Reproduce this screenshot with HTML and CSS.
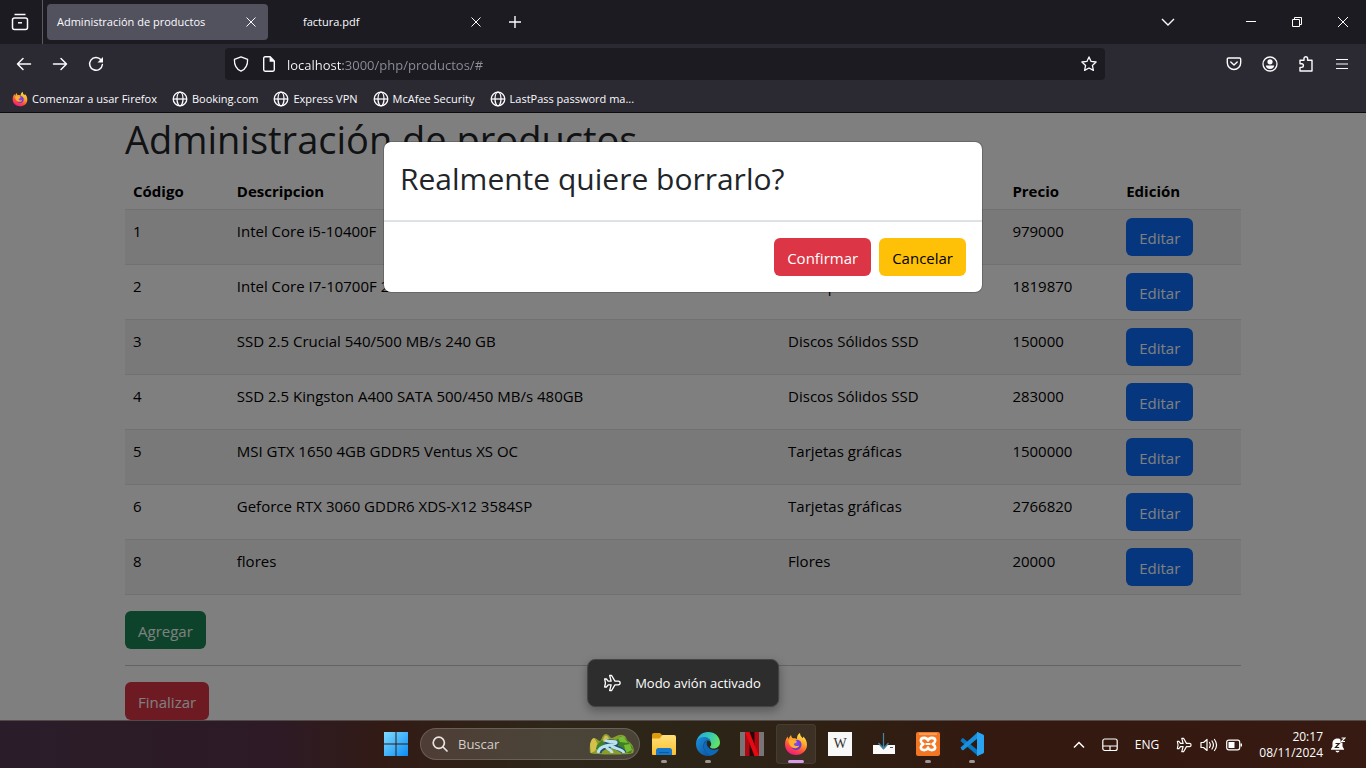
FILE: index.html
```html
<!DOCTYPE html>
<html lang="es">
<head>
<meta charset="utf-8">
<title>Administración de productos</title>
<link rel="stylesheet" href="styles.css">
</head>
<body>
<svg class="defs" aria-hidden="true">
  <defs>
    <linearGradient id="ff-body" x1="0.8" y1="0" x2="0.3" y2="1"><stop offset="0" stop-color="#fff04a"/><stop offset=".4" stop-color="#ffa22c"/><stop offset=".7" stop-color="#ff4b3e"/><stop offset="1" stop-color="#f0148a"/></linearGradient>
    <radialGradient id="ff-core" cx=".5" cy=".4" r=".6"><stop offset="0" stop-color="#8a4cf4"/><stop offset="1" stop-color="#5a37c8"/></radialGradient>
    <linearGradient id="win" x1="0" y1="0" x2="1" y2="1"><stop offset="0" stop-color="#7fdcff"/><stop offset="1" stop-color="#0a8cf5"/></linearGradient>
    <linearGradient id="folder" x1="0" y1="0" x2="0" y2="1"><stop offset="0" stop-color="#ffdf7a"/><stop offset="1" stop-color="#fcbf2d"/></linearGradient>
    <linearGradient id="edge-a" x1="0" y1="0" x2="1" y2=".3"><stop offset="0" stop-color="#22a5e0"/><stop offset=".6" stop-color="#35c9b4"/><stop offset="1" stop-color="#5fe06a"/></linearGradient>
    <linearGradient id="edge-b" x1="0" y1="0" x2="1" y2="1"><stop offset="0" stop-color="#1b8fdc"/><stop offset="1" stop-color="#0c4f9e"/></linearGradient>
    <symbol id="firefox" viewBox="0 0 24 24">
      <path fill="url(#ff-body)" d="M12 23C5.500 23 1 18.300 1 12.500c0-3 1-5.800 2.600-7.900.2 1.200.6 1.900 1.200 2.500.3-1.700 1-3 2.300-4.200.1 1.500.7 2.600 1.700 3.400 1.800-.4 3.200 0 4.200.9C12.700 4.300 13.900 2.200 16 1c.1 2.500 1.200 3.700 2.700 5.200.4-.5.6-1 .6-1.700 2.400 2.200 3.700 5 3.700 8.200C23 18.600 18.300 23 12 23z"/>
      <path fill="url(#ff-core)" d="M7.500 9.500c1.300-.5 2.500-.3 3.400.4.700-1.500 2-2.200 3.500-2 2 .8 3.100 2.500 3.100 4.700 0 3-2.400 5.300-5.400 5.300-2.900 0-5.300-2.200-5.300-5.100 0-1.200.2-2.300.7-3.300z"/>
      <path fill="#ffb02e" d="M4.500 8.500c1.700-1.300 4.300-1.200 5.700.2 1.100.1 2.200.2 2.800.8-.4 1.300-1.900 1.700-3 2.300-.4 1.200.6 2.300 2.300 2.300 1.200 0 1.900-.6 3-.3-.9 1.900-3.200 3-5.500 2.300-2.800-.8-5.300-3.600-5.300-7.600z"/>
    </symbol>
    <symbol id="globe" viewBox="0 0 16 16">
      <g fill="none" stroke="#fbfbfe" stroke-width="1.300"><circle cx="8" cy="8" r="6.800"/><ellipse cx="8" cy="8" rx="3" ry="6.800"/><path d="M1.200 8h13.600"/></g>
    </symbol>
    <symbol id="plane" viewBox="0 0 18 18">
      <path fill="none" stroke="#fff" stroke-width="1.300" stroke-linejoin="round" d="M1.500 5h1.800L5 7.200h3L6.500 1.500h2L11.800 7.200H15c1.300 0 2 .8 2 1.800s-.7 1.800-2 1.800h-3.200l-3.300 5.700h-2L8 10.800H5L3.300 13H1.500l.8-4z"/>
    </symbol>
    <symbol id="cross" viewBox="0 0 12 12"><path d="M1.500 1.500l9 9M10.500 1.500l-9 9" fill="none" stroke="#fbfbfe"/></symbol>
  </defs>
</svg>

<header class="browser">
  <div class="tabstrip">
    <button class="view" aria-label="Ver pestañas"><svg width="18" height="18" viewBox="0 0 18 18" fill="none" stroke="#fbfbfe" stroke-width="1.500"><path d="M3.500 1.500h11"/><rect x="1.500" y="5" width="15" height="11.500" rx="2"/><path d="M7 9.800h4"/></svg></button>
    <div class="tab active"><span>Administración de productos</span><button aria-label="Cerrar pestaña"><svg width="12" height="12"><use href="#cross"/></svg></button></div>
    <div class="tab"><span>factura.pdf</span><button aria-label="Cerrar pestaña"><svg width="12" height="12"><use href="#cross"/></svg></button></div>
    <button class="new-tab" aria-label="Nueva pestaña"><svg width="12" height="12" viewBox="0 0 12 12" stroke="#fbfbfe" stroke-width="1.400"><path d="M6 0v12M0 6h12"/></svg></button>
    <button class="list-tabs" aria-label="Lista de pestañas"><svg width="14" height="8" viewBox="0 0 14 8" fill="none" stroke="#fbfbfe" stroke-width="1.400"><path d="M1 1l6 6 6-6"/></svg></button>
    <div class="window-buttons">
      <button aria-label="Minimizar"><svg width="10" height="10" viewBox="0 0 10 10"><path d="M0 4.500h10" stroke="#fff"/></svg></button>
      <button aria-label="Restaurar"><svg width="10" height="10" viewBox="0 0 10 10" fill="none" stroke="#fff"><path d="M.5 2.500h7v7h-7zM2.500 2.500v-2h7v7h-2"/></svg></button>
      <button aria-label="Cerrar"><svg width="10" height="10" viewBox="0 0 10 10"><path d="M0 0l10 10M10 0L0 10" stroke="#fff"/></svg></button>
    </div>
  </div>

  <div class="toolbar">
    <div class="tools">
      <button aria-label="Atrás"><svg width="16" height="16" viewBox="0 0 16 16" fill="none" stroke="#fbfbfe" stroke-width="1.500" stroke-linecap="round" stroke-linejoin="round"><path d="M14.500 8H1.500M7 2.500L1.500 8 7 13.500"/></svg></button>
      <button aria-label="Adelante"><svg width="16" height="16" viewBox="0 0 16 16" fill="none" stroke="#fbfbfe" stroke-width="1.500" stroke-linecap="round" stroke-linejoin="round"><path d="M1.500 8h13M9 2.500L14.500 8 9 13.500"/></svg></button>
      <button aria-label="Recargar"><svg width="16" height="16" viewBox="0 0 16 16"><path d="M13 3.800A6.400 6.400 0 1 0 14.400 8.500" fill="none" stroke="#fbfbfe" stroke-width="1.500" stroke-linecap="round"/><path d="M15 1v5.500H9.500z" fill="#fbfbfe"/></svg></button>
    </div>
    <div class="urlbar">
      <svg width="16" height="16" viewBox="0 0 16 16" fill="none" stroke="#fbfbfe" stroke-width="1.300" stroke-linejoin="round"><path d="M8 .8l6.600 2.600c.2 5.500-2 9.600-6.600 11.800C3.400 13 1.200 8.900 1.400 3.400z"/></svg>
      <svg width="16" height="16" viewBox="0 0 16 16"><path d="M2.700 2.200c0-.8.500-1.400 1.400-1.400h5l4.200 4.300v8.700c0 .8-.5 1.400-1.400 1.400H4.100c-.9 0-1.400-.6-1.400-1.400z" fill="none" stroke="#fbfbfe" stroke-width="1.400"/><path d="M8.600.8v5h5z" fill="#fbfbfe"/></svg>
      <input type="text" aria-label="Dirección" value="localhost:3000/php/productos/#">
      <button aria-label="Añadir a marcadores"><svg width="16" height="16" viewBox="0 0 16 16" fill="none" stroke="#fbfbfe" stroke-width="1.300" stroke-linejoin="round"><path d="M8 .9l2.100 4.500 5 .6-3.700 3.400 1 5L8 12l-4.400 2.400 1-5L.9 6l5-.6z"/></svg></button>
    </div>
    <div class="tools">
      <button aria-label="Pocket"><svg width="16" height="16" viewBox="0 0 16 16" fill="none" stroke="#fbfbfe" stroke-width="1.400" stroke-linecap="round" stroke-linejoin="round"><path d="M2.500 2h11c.7 0 1.200.5 1.200 1.200v3.600a6.700 6.700 0 0 1-13.400 0V3.200C1.300 2.500 1.800 2 2.500 2z"/><path d="M4.800 6L8 9l3.200-3"/></svg></button>
      <button aria-label="Cuenta"><svg width="16" height="16" viewBox="0 0 16 16"><circle cx="8" cy="8" r="7" fill="none" stroke="#fbfbfe" stroke-width="1.300"/><circle cx="8" cy="5.800" r="2.600" fill="#fbfbfe"/><path d="M3.800 9.500h8.400c0 2-1.800 3.400-4.200 3.400s-4.200-1.400-4.200-3.400z" fill="#fbfbfe"/></svg></button>
      <button aria-label="Extensiones"><svg width="16" height="16" viewBox="0 0 16 16" fill="none" stroke="#fbfbfe" stroke-width="1.400" stroke-linejoin="round"><path d="M2 4.300h4V2.500a1.800 1.800 0 0 1 3.600 0v1.800H14V15H2v-3.600h1.600a1.800 1.800 0 0 0 0-3.600H2z"/></svg></button>
      <button aria-label="Menú"><svg width="16" height="16" viewBox="0 0 16 16" stroke="#fbfbfe" stroke-width="1.200"><path d="M2 3.500h12M2 8h12M2 12.500h12"/></svg></button>
    </div>
  </div>

  <nav class="bookmarks">
    <a href="#"><svg width="16" height="16"><use href="#firefox"/></svg>Comenzar a usar Firefox</a>
    <a href="#"><svg width="16" height="16"><use href="#globe"/></svg>Booking.com</a>
    <a href="#"><svg width="16" height="16"><use href="#globe"/></svg>Express VPN</a>
    <a href="#"><svg width="16" height="16"><use href="#globe"/></svg>McAfee Security</a>
    <a href="#"><svg width="16" height="16"><use href="#globe"/></svg>LastPass password ma...</a>
  </nav>
</header>

<main class="page">
  <div class="container">
    <h1>Administración de productos</h1>
    <table class="products">
      <colgroup><col class="c-code"><col class="c-desc"><col class="c-cat"><col class="c-price"><col class="c-edit"></colgroup>
      <thead><tr><th scope="col">Código</th><th scope="col">Descripcion</th><th scope="col">Categoría</th><th scope="col">Precio</th><th scope="col">Edición</th></tr></thead>
      <tbody>
        <tr><td>1</td><td>Intel Core i5-10400F</td><td>Microprocesadores</td><td>979000</td><td><a class="btn primary" href="#">Editar</a></td></tr>
        <tr><td>2</td><td>Intel Core I7-10700F 2.9GHz</td><td>Microprocesadores</td><td>1819870</td><td><a class="btn primary" href="#">Editar</a></td></tr>
        <tr><td>3</td><td>SSD 2.5 Crucial 540/500 MB/s 240 GB</td><td>Discos Sólidos SSD</td><td>150000</td><td><a class="btn primary" href="#">Editar</a></td></tr>
        <tr><td>4</td><td>SSD 2.5 Kingston A400 SATA 500/450 MB/s 480GB</td><td>Discos Sólidos SSD</td><td>283000</td><td><a class="btn primary" href="#">Editar</a></td></tr>
        <tr><td>5</td><td>MSI GTX 1650 4GB GDDR5 Ventus XS OC</td><td>Tarjetas gráficas</td><td>1500000</td><td><a class="btn primary" href="#">Editar</a></td></tr>
        <tr><td>6</td><td>Geforce RTX 3060 GDDR6 XDS-X12 3584SP</td><td>Tarjetas gráficas</td><td>2766820</td><td><a class="btn primary" href="#">Editar</a></td></tr>
        <tr><td>8</td><td>flores</td><td>Flores</td><td>20000</td><td><a class="btn primary" href="#">Editar</a></td></tr>
      </tbody>
    </table>
    <button class="btn success">Agregar</button>
    <hr>
    <a class="btn danger" href="#">Finalizar</a>
  </div>
  <div class="backdrop">
    <div class="modal" role="dialog" aria-modal="true" aria-labelledby="modal-title">
      <div class="modal-header"><h2 id="modal-title">Realmente quiere borrarlo?</h2></div>
      <div class="modal-footer"><button class="btn danger">Confirmar</button><button class="btn warning">Cancelar</button></div>
    </div>
  </div>
  <div class="toast" role="status"><svg width="18" height="18"><use href="#plane"/></svg>Modo avión activado</div>
</main>

<footer class="taskbar">
  <div class="apps">
    <button class="app" aria-label="Inicio"><svg width="24" height="24" viewBox="0 0 24 24" fill="url(#win)"><path d="M0 0h11.500v11.500H0zM12.500 0H24v11.500H12.500zM0 12.500h11.500V24H0zM12.500 12.500H24V24H12.500z"/></svg></button>
    <label class="search">
      <svg width="16" height="16" viewBox="0 0 16 16" fill="none" stroke="#e8e4e2" stroke-width="1.700" stroke-linecap="round"><circle cx="6.800" cy="6.800" r="5.600"/><path d="M11 11l4 4"/></svg>
      <input type="text" aria-label="Buscar" placeholder="Buscar">
      <svg width="46" height="22" viewBox="0 0 46 22"><path fill="#8a9c2c" d="M1 20C0 12 2 6 5 5c3 0 4 3 6 3 2-1 2-7 6-7 3 0 4 4 6 4 4-1 6-4 10-3 4 0 4 4 6 6 5 3 7 9 5 12-3 2-39 2-43 0z"/><path fill="#d4c04a" d="M1 12C2 7 4 4 6 6l3 6-3 6-4 2zM14 7c1-4 3-6 5-3l3 5-5 4z"/><path fill="#3f8226" d="M26 8l6-5 5 3 7 9-2 5H32l-2-7zM8 12l5-5 4 5-5 5-5-1z"/><path fill="#78bb34" d="M29 5l5-2 5 7-8-1zM35 12l6-1 2 6-6 3z"/><path fill="none" stroke="#264b6e" stroke-width="5" d="M16 8c4 2 12 0 11 3-3 2-16 1-17 9M23 11c0 4 11 4 12 9"/><path fill="none" stroke="#b8e2ee" stroke-width="3" d="M16 7c4 3 12 0 11 3-3 3-17 1-18 10M22 11c-1 5 12 4 13 9M18 12c-3 4 5 4 5 8"/></svg>
    </label>
    <button class="app open" aria-label="Explorador"><svg width="24" height="24" viewBox="0 0 24 24"><path fill="#dd9b0c" d="M0 3a2 2 0 0 1 2-2h6l3 3-2 5H0z"/><path fill="url(#folder)" d="M0 6.500h7.500L10.500 3H22a2 2 0 0 1 2 2v17a1 1 0 0 1-1 1H1a1 1 0 0 1-1-1z"/><path fill="#1478cf" d="M4 23v-4.500A2.500 2.500 0 0 1 6.500 16h11a2.500 2.500 0 0 1 2.500 2.500V23z"/><path stroke="#0d599c" d="M7 20.500h10"/></svg></button>
    <button class="app open" aria-label="Edge"><svg width="24" height="24" viewBox="0 0 24 24"><path fill="url(#edge-a)" d="M.3 10C1.500 4 6 0 12 0c7 0 12 4.800 12 10.500 0 3.500-2.800 6-6.300 6-2.200 0-3.700-.6-3.700-1.500 0-.7 1.200-1.200 1.200-3C15.200 9 12 7 8.500 7 4.500 7 1.500 8.500.3 10z"/><path fill="url(#edge-b)" d="M0 12c0-4 3.500-7 8-7 3.500 0 6.500 2 7 5-1-1-2-1.500-3.500-1.500-2.200 0-4 2-4 5.500 0 5 4 8.500 8 9.500-1 .4-2.200.5-3.500.5C5.400 24 0 18.800 0 12z"/><path fill="#0d68b8" d="M11.500 8.500C9.300 9 7.500 11 7.500 14c0 5 4 9 8 9.500 3.300-1 5.800-3.200 7.200-5.800.2-.5-.2-.8-.7-.6-2.500 1.200-6 1.200-8.500-.6-2.800-2-3.500-5.500-2-8z"/></svg></button>
    <button class="app" aria-label="Netflix"><svg width="24" height="24" viewBox="0 0 24 24"><path fill="#777575" d="M0 0h24v24H0z"/><path fill="#25090a" d="M5 0h14v24H5z"/><path fill="#b20710" d="M5 0h4.500v24H5zM14.500 0H19v24h-4.500z"/><path fill="#e50914" d="M5 0h4.500L19 24h-4.500z"/></svg></button>
    <button class="app open current" aria-label="Firefox"><svg width="24" height="24"><use href="#firefox"/></svg></button>
    <button class="app wiki" aria-label="Wikipedia"><span>W</span></button>
    <button class="app" aria-label="Descargas"><svg width="24" height="24" viewBox="0 0 24 24"><path fill="#fafafa" d="M1 13h22v9H1z"/><path stroke="#555" d="M18 15.500h3"/><path fill="#2b2522" d="M7.500 13h8l-4 4.500z"/><path fill="none" stroke="#3e88a8" stroke-width="1.200" d="M11.500 1v15M6.500 11l5 5.500 5-5.500"/></svg></button>
    <button class="app open" aria-label="XAMPP"><svg width="24" height="24" viewBox="0 0 24 24"><rect width="24" height="24" rx="2" fill="#f37623"/><path stroke="#fbc49a" d="M3 2h18"/><path fill="none" stroke="#fff" stroke-width="2.600" stroke-linejoin="round" d="M12 8.500C11 5 4.800 5 4.800 8.700c0 1.900 1.500 2.500 2.700 3.300-1.200.8-2.700 1.400-2.700 3.300 0 3.700 6.200 3.700 7.200.2 1 3.500 7.200 3.500 7.200-.2 0-1.900-1.500-2.500-2.700-3.300 1.200-.8 2.700-1.400 2.700-3.300C19.200 5 13 5 12 8.500z"/><path stroke="#fff" stroke-width="2" d="M9.500 12h5"/></svg></button>
    <button class="app open" aria-label="Visual Studio Code"><svg width="24" height="24" viewBox="0 0 24 24"><path fill="#0879c4" d="M1.500 7L3 6l15 12.500V24L.5 9z"/><path fill="#1790df" d="M1.500 17.500L3 18.500 18 6V0L.5 15.500z"/><path fill="#29a4f3" d="M17.500 0L23 2.500c.6.300 1 .8 1 1.500v16c0 .7-.4 1.200-1 1.500L17.500 24c-.5 0-.5-.5-.5-1V1c0-.5 0-1 .5-1z"/></svg></button>
  </div>
  <div class="tray">
    <button aria-label="Mostrar iconos ocultos"><svg width="12" height="8" viewBox="0 0 12 8" fill="none" stroke="#fff" stroke-width="1.500"><path d="M1 6.500l5-5 5 5"/></svg></button>
    <button aria-label="Panel táctil"><svg width="16" height="14" viewBox="0 0 16 14" fill="none" stroke="#fff" stroke-width="1.200"><rect x=".8" y="1" width="14.400" height="11.500" rx="2"/><path d="M1 8h14M8 8v4.500"/></svg></button>
    <button class="lang">ENG</button>
    <button class="quick" aria-label="Ajustes rápidos">
      <svg width="16" height="16"><use href="#plane"/></svg>
      <svg width="18" height="16" viewBox="0 0 18 16" fill="none" stroke="#fff" stroke-width="1.200" stroke-linecap="round" stroke-linejoin="round"><path d="M1 5.500h2.500L7 2.500v11l-3.500-3H1z"/><path d="M9.500 5.500c1 1.500 1 3.500 0 5M12 4c1.800 2.500 1.800 5.500 0 8M14.500 2.500c2.600 3.500 2.600 7.500 0 11"/></svg>
      <svg width="16" height="12" viewBox="0 0 16 12"><rect x=".7" y="1.200" width="13" height="9.600" rx="2" fill="none" stroke="#fff" stroke-width="1.200"/><path fill="#fff" d="M2.500 3h6v6h-6zM14.500 4.500H16v3h-1.500z"/></svg>
    </button>
    <div class="clock"><time>20:17</time><time>08/11/2024</time></div>
    <button class="bell" aria-label="Notificaciones"><svg width="15" height="16" viewBox="0 0 15 16"><path fill="#fff" d="M6.500 1.500c2.800 0 5 2 5 4.800v3.200l1.500 2.500v.8H0V12l1.500-2.500V6.300c0-2.800 2.200-4.800 5-4.800zM4.500 13.800h4c-.3 1.200-1 1.700-2 1.700s-1.700-.5-2-1.700z"/><path fill="#36190f" d="M9.500 0H15v5.500H9.500z"/><path fill="none" stroke="#fff" stroke-width="1.100" d="M10.500 1h3.500l-3.500 3.500H14"/><path fill="none" stroke="#36190f" stroke-width="1.200" d="M4.500 6.500h3.700l-3.700 4h3.700"/></svg></button>
  </div>
</footer>
</body>
</html>
```
FILE: styles.css
```css
* { box-sizing: border-box; }

body {
  margin: 0;
  height: 100vh;
  display: flex;
  flex-direction: column;
  overflow: hidden;
  font: 11px/16px "Open Sans", "Noto Sans", sans-serif;
  color: #212529;
  background: #fff;
}

button, input { font: inherit; color: inherit; border: 0; background: none; padding: 0; }
svg { display: block; flex: none; }
.defs { position: absolute; width: 0; height: 0; }

/* Browser window */
.browser { flex: none; background: #2b2a33; color: #fbfbfe; border-bottom: 1px solid #0c0c0d; }

.tabstrip { display: flex; align-items: center; height: 44px; background: #1c1b22; }
.tabstrip button { display: flex; align-items: center; justify-content: center; }
.tabstrip .view { width: 43px; height: 44px; padding-right: 2px; border-right: 1px solid #5b5b66; }
.tab {
  display: flex;
  align-items: center;
  justify-content: space-between;
  width: 221px;
  height: 36px;
  padding: 0 11px 0 10px;
  margin-left: 4px;
  border-radius: 4px;
}
.tab.active { background: #52525e; }
.tab:not(.active) { padding-left: 31px; }
.tabstrip .new-tab { width: 36px; height: 36px; margin-left: 4px; }
.tabstrip .list-tabs { width: 36px; height: 36px; margin-left: auto; margin-right: 42px; }
.window-buttons { display: flex; }
.window-buttons button { width: 46px; height: 44px; }

.toolbar { display: flex; align-items: center; justify-content: space-between; height: 40px; padding: 0 6px; }
.tools { display: flex; }
.tools button { width: 36px; height: 32px; display: flex; align-items: center; justify-content: center; }
.urlbar {
  display: flex;
  align-items: center;
  gap: 12px;
  width: 65%;
  height: 32px;
  padding: 0 8px;
  background: #1c1b22;
  border-radius: 4px;
}
.urlbar input {
  flex: 1;
  min-width: 0;
  height: 32px;
  padding-top: 2px;
  margin-left: -2px;
  font-size: 13px;
  background: linear-gradient(90deg, #fbfbfe 56px, #8f8f9a 56px);
  -webkit-background-clip: text;
  background-clip: text;
  color: transparent;
}

.bookmarks { display: flex; gap: 15px; height: 28px; padding: 1px 12px 0; align-items: center; }
.bookmarks a { display: flex; align-items: center; gap: 4px; color: inherit; text-decoration: none; }

/* Page */
.page { position: relative; flex: 1; min-height: 0; overflow: hidden; font-size: 15px; line-height: 24px; }
.container { max-width: 1140px; margin: 0 auto; padding: 0 12px; }
h1 { margin: 0 0 6px; padding-top: 2px; font-size: 38px; line-height: 48px; font-weight: 400; }

.products { width: 100%; table-layout: fixed; border-collapse: collapse; margin-bottom: 16px; color: #000; }
.products th, .products td { padding: 9px 8px 7px; text-align: left; vertical-align: top; border-bottom: 1px solid #dee2e6; }
.products td:last-child { padding: 8px; }
.products th { padding: 10px 8px 6px; font-size: 15px; }
.products td { height: 55px; }
.products tbody tr:nth-child(odd) { background: #f2f2f2; }
.c-code { width: 9.300%; }
.c-desc { width: 49.400%; }
.c-cat { width: 20.100%; }
.c-price { width: 10.200%; }

.btn {
  display: inline-block;
  height: 38px;
  padding: 8px 13px 6px;
  border-radius: 6px;
  font-size: 15px;
  line-height: 24px;
  color: #fff;
  text-decoration: none;
  vertical-align: top;
}
.primary { background: #0d6efd; }
.success { background: #198754; }
.danger { background: #dc3545; }
.warning { background: #ffc107; color: #000; }
hr { margin: 16px 0; border: 0; border-top: 1px solid #c7c8c9; }

.backdrop { position: absolute; inset: 0; padding: 28px 16px; background: rgba(0, 0, 0, .5); }
.modal {
  max-width: 600px;
  margin: 0 auto;
  background: #fff;
  background-clip: padding-box;
  border: 1px solid rgba(0, 0, 0, .18);
  border-radius: 8px;
}
.modal-header { padding: 18px 16px 22px; border-bottom: 2px solid #dee2e6; }
.modal-header h2 { margin: 0; font-size: 30px; line-height: 38px; font-weight: 400; }
.modal-footer { display: flex; justify-content: flex-end; gap: 8px; padding: 16px; }

.toast {
  position: absolute;
  left: 50%;
  bottom: 13px;
  transform: translateX(-50%);
  display: flex;
  align-items: center;
  gap: 14px;
  height: 48px;
  padding: 0 17px 0 15px;
  border: 1px solid #454545;
  border-radius: 8px;
  background: #2d2d2d;
  box-shadow: 0 4px 10px rgba(0, 0, 0, .3);
  color: #fff;
  font-size: 13px;
  white-space: nowrap;
}

/* Taskbar */
.taskbar {
  flex: none;
  display: grid;
  grid-template-columns: 1fr auto 1fr;
  align-items: center;
  height: 48px;
  padding-left: 2px;
  border-top: 1px solid #534a48;
  background: linear-gradient(90deg, #2a1d29 0%, #2d1a26 20%, #321b15 28%, #2e2618 40%, #2c2517 52%, #33190f 72%, #371a12 100%);
  color: #fff;
}
.apps { grid-column: 2; display: flex; align-items: center; gap: 4px; padding-bottom: 1px; }
.app { position: relative; width: 40px; height: 40px; display: flex; align-items: center; justify-content: center; border-radius: 4px; }
.app.open::after { content: ""; position: absolute; bottom: 1px; left: 17px; width: 6px; height: 3px; border-radius: 2px; background: #9d9590; }
.app.current { background: rgba(255, 255, 255, .07); border: 1px solid rgba(255, 255, 255, .06); }
.app.current::after { left: 11px; bottom: 0; width: 16px; background: #d89be8; }
.wiki span { width: 24px; height: 24px; background: #f8f8f8; color: #333; font: 14px/24px "Liberation Serif", serif; }
.search {
  display: flex;
  align-items: center;
  width: 220px;
  height: 32px;
  padding: 0 4px 0 11px;
  gap: 10px;
  border: 1px solid rgba(255, 255, 255, .16);
  border-radius: 16px;
  background: rgba(255, 255, 255, .14);
}
.search input { flex: 1; min-width: 0; font-size: 13px; }
.search input::placeholder { color: #d4cecb; opacity: 1; }

.tray { display: flex; align-items: center; justify-content: flex-end; gap: 17px; padding-right: 20px; font-size: 12px; }
.quick { display: flex; align-items: center; gap: 8px; }
.clock { display: flex; flex-direction: column; text-align: right; }
.bell { margin-left: -9px; }
```
